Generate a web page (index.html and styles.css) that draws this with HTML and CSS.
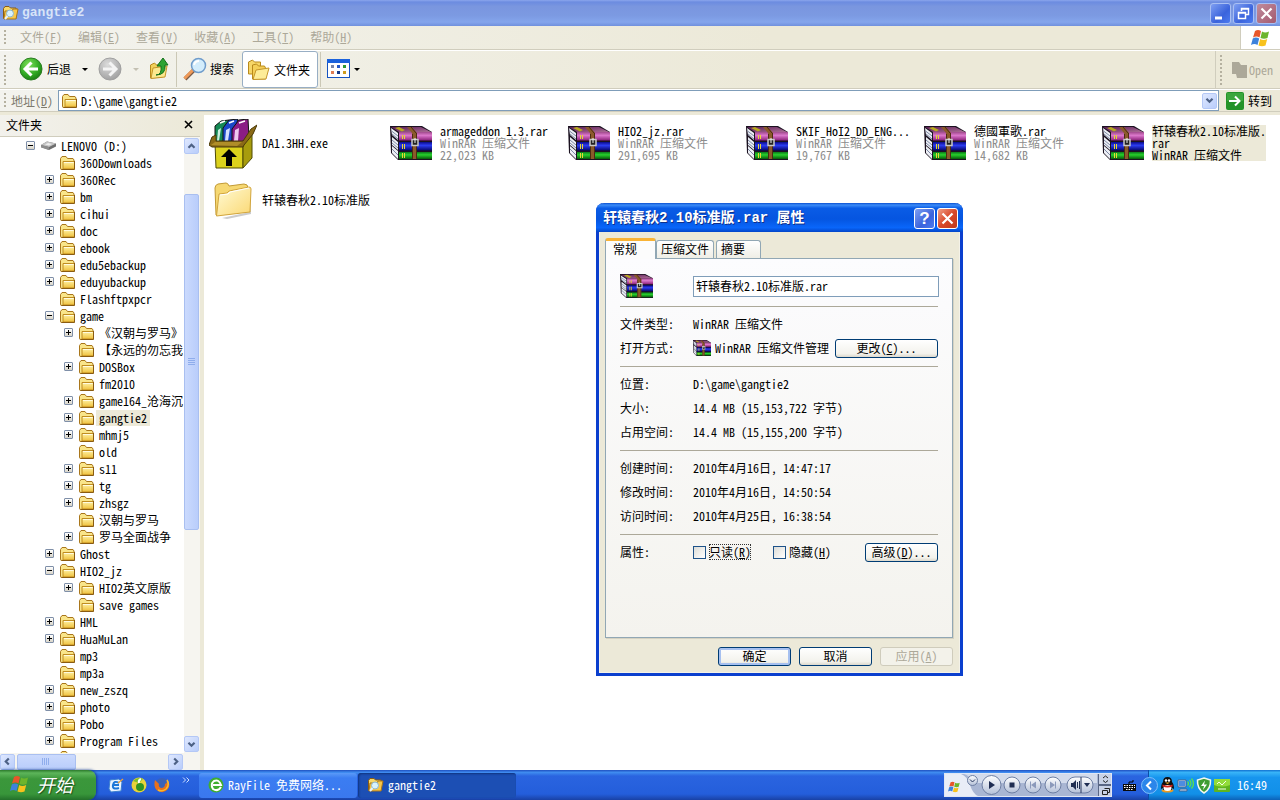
FILE: index.html
```html
<!DOCTYPE html>
<html lang="zh-CN">
<head>
<meta charset="utf-8">
<title>gangtie2</title>
<link rel="stylesheet" href="styles.css">
</head>
<body>
<svg class="defs" aria-hidden="true">
  <defs>
    <linearGradient id="gFold" x1="0" y1="0" x2="0" y2="1"><stop offset="0" stop-color="#fff3a6"/><stop offset="1" stop-color="#efc03c"/></linearGradient>
    <linearGradient id="gBig" x1="0" y1="0" x2="1" y2="1"><stop offset="0" stop-color="#fffbd6"/><stop offset="1" stop-color="#fbd873"/></linearGradient>
    <radialGradient id="gGreen" cx=".4" cy=".3" r=".8"><stop offset="0" stop-color="#7fe05a"/><stop offset=".6" stop-color="#2fa822"/><stop offset="1" stop-color="#14700f"/></radialGradient>
    <radialGradient id="gGrey" cx=".4" cy=".3" r=".8"><stop offset="0" stop-color="#dcdcdc"/><stop offset="1" stop-color="#9a9a9a"/></radialGradient>
    <linearGradient id="gPink" x1="0" y1="0" x2="0" y2="1"><stop offset="0" stop-color="#a04a8c"/><stop offset=".4" stop-color="#dc78cc"/><stop offset="1" stop-color="#8a1f78"/></linearGradient>
    <linearGradient id="gTop" x1="0" y1="0" x2="1" y2="1"><stop offset="0" stop-color="#5a1c55"/><stop offset="1" stop-color="#ad6f96"/></linearGradient>
    <linearGradient id="gBlue" x1="0" y1="0" x2="0" y2="1"><stop offset="0" stop-color="#0a0a8a"/><stop offset=".4" stop-color="#2c3cf0"/><stop offset="1" stop-color="#05056a"/></linearGradient>
    <linearGradient id="gGrn" x1="0" y1="0" x2="0" y2="1"><stop offset="0" stop-color="#0a7a1a"/><stop offset=".4" stop-color="#28d02c"/><stop offset="1" stop-color="#055a0a"/></linearGradient>
    <linearGradient id="gBtn" x1="0" y1="0" x2="0" y2="1"><stop offset="0" stop-color="#ffffff"/><stop offset="1" stop-color="#b4c0d8"/></linearGradient>
  </defs>
  <symbol id="folder" viewBox="0 0 17 16">
    <path d="M2 14.500L1.500 13V3.500L3 1.500h4l1.500 2H14l1 1.500v9z" fill="#f9e58a" stroke="#a9761b"/>
    <path d="M4 6.500h11.500V14H4z" fill="url(#gFold)" stroke="#c08d20"/>
    <path d="M3 14.500h12.500V6" fill="none" stroke="#8a5c12"/>
    <path d="M5 7.500h9.500" stroke="#fffbe0"/>
  </symbol>
  <symbol id="bigfolder" viewBox="0 0 38 38">
    <path d="M8 37L36 31l1-12v14l-24 5z" fill="#999" opacity=".5"/>
    <path d="M2 34L1 7q0-3 3-4l8-1q2 0 3 3l15-2q4 0 4 4l-3 24z" fill="#f6d872" stroke="#c29a35"/>
    <path d="M2.500 35L5 13l8-1 2-2 20-4q2 0 2 2l-1 23z" fill="url(#gBig)" stroke="#d2a53c"/>
    <path d="M6 14l8-1 2-2 19-4" stroke="#fff" fill="none"/>
  </symbol>
  <symbol id="search-folder" viewBox="0 0 17 16">
    <path d="M1.500 13.500V3.500L3 1.500h4l1.500 1.500H14v10.500z" fill="#f9d96a" stroke="#8a5c12"/>
    <path d="M3 6h7l1-2h5l-2 10H2z" fill="#f8c84a" stroke="#a9761b"/>
    <circle cx="8" cy="8.500" r="3.500" fill="#d8f2fd" stroke="#8db6cf"/>
    <path d="M5.500 11l-2.500 3" stroke="#e8f2fa" stroke-width="2"/>
  </symbol>
  <symbol id="drive" viewBox="0 0 17 12">
    <path d="M1 5l6-3.500 9 2v3L9 10 1 7z" fill="#6f6f6f"/><path d="M1 5l6-3.500 9 2L9 7z" fill="#c4c4c4"/><path d="M1 5l8 2v3L1 7.500z" fill="#8d8d8d"/><path d="M5 4.500l3-1.500 4 1-3 1.500z" fill="#eee"/>
  </symbol>
  <symbol id="rar" viewBox="0 0 42 34">
    <path d="M0 0h32l10 6v28H8L1 27z" fill="#1b1220"/>
    <path d="M1 1h30l10 5H9z" fill="url(#gTop)"/>
    <path d="M5 2l4-1 6 3-3 1.500z" fill="#b8a91e"/>
    <path d="M1 2l7 5v7L2 9zM2 11l6 5v8l-6-5zM2 20l6 5v8l-6-6z" fill="#eceef4"/>
    <path d="M1.500 5L8 10M2 8l6 5M2 14l6 5M2 17l6 5M2 23l6 6" stroke="#7f8aa6"/>
    <path d="M9 6h33v8.500H9z" fill="url(#gPink)"/>
    <path d="M9 16h33v8.500H9z" fill="url(#gBlue)"/>
    <path d="M9 26h33v7H9z" fill="url(#gGrn)"/>
    <path d="M12.500 9v4m2-4v4m-2 5v5m2-5v5m-2 4v5m2-5v5" stroke="#e8d832"/>
    <path d="M17 1h5l5 6v26h-5V7z" fill="#8b5a2b"/><path d="M26.500 7v26M21 1l5 6M22.500 8v25" stroke="#4b2c10" fill="none"/>
    <rect x="22" y="13.500" width="6" height="6" fill="#222" stroke="#c8c8c8" stroke-width="1.500"/><path d="M25 12v5" stroke="#eee"/>
  </symbol>
  <symbol id="sfx" viewBox="0 0 48 50">
    <path d="M6 23V7l6-5 8-1-5 21z" fill="#158a55" stroke="#111"/><path d="M9 11l3-2-2 13H8z" fill="#c9efdf"/>
    <path d="M14 23V9l6-8 9-1-6 22z" fill="#1b48c8" stroke="#111"/><path d="M17 11l4-2-2 13h-3z" fill="#d4e0ff"/>
    <path d="M23 23V10l7-9 9-1 1 18-9 6z" fill="#8b1d86" stroke="#111"/><path d="M26 11l4-2-1 13h-4z" fill="#efc7f0"/>
    <path d="M11 4l5-2M20 4l5-2M30 4l6-2" stroke="#fff" stroke-width="1.500"/>
    <path d="M6 24l28-1v26H7z" fill="#dcd21c" stroke="#4e4a05"/>
    <path d="M34 23l9-7v23l-9 10z" fill="#a79c0d" stroke="#4e4a05"/>
    <path d="M0 26l3-8 4-2v6h27l8-12 6-4-4 9-9 11-1 2H3z" fill="#8a6a16" stroke="#4b3a08"/>
    <path d="M2 26l4-3h27l-5 4z" fill="#b08e28"/>
    <path d="M20 30l8 8h-5v9h-6v-9h-5z" fill="#000"/>
  </symbol>
  <symbol id="flag" viewBox="0 0 20 18">
    <path d="M4 2q3-2 6 0L8.500 8.500q-3-2-6.500 0z" fill="#e8562a"/><path d="M11 2.500q3 2 7 0L16.500 9q-3.500 1.500-7 0z" fill="#6db52c"/>
    <path d="M1.800 9.500q3-2 6.400 0L6.500 16q-3-2-6.500 0z" fill="#3d82dc"/><path d="M9.200 10q3 2 7 0l-1.700 6.500q-3.500 1.500-7 0z" fill="#f8c21c"/>
  </symbol>
</svg>

<header class="titlebar">
  <svg class="i17"><use href="#search-folder"/></svg>
  <h1>gangtie2</h1>
  <div class="winbtns">
    <button class="wb" aria-label="最小化"><svg viewBox="0 0 19 19"><path d="M4 14h7" stroke="#fff" stroke-width="3"/></svg></button>
    <button class="wb" aria-label="还原"><svg viewBox="0 0 19 19"><path d="M7.500 7V4.500h7v6H12M7 5h8M4.500 8.500h7v6h-7zM4 9h8" fill="none" stroke="#fff" stroke-width="1.500"/></svg></button>
    <button class="wb x" aria-label="关闭"><svg viewBox="0 0 19 19"><path d="M4.500 4.500l10 10m0-10l-10 10" stroke="#fff" stroke-width="2.200"/></svg></button>
  </div>
</header>

<nav class="menubar">
  <i class="grip"></i>
  <button>文件(<u>F</u>)</button><button>编辑(<u>E</u>)</button><button>查看(<u>V</u>)</button><button>收藏(<u>A</u>)</button><button>工具(<u>T</u>)</button><button>帮助(<u>H</u>)</button>
  <div class="brand"><svg width="20" height="18"><use href="#flag"/></svg></div>
</nav>

<div class="toolbar">
  <i class="grip"></i>
  <button class="tb back"><svg width="24" height="24" viewBox="0 0 24 24"><circle cx="12" cy="12" r="11" fill="url(#gGreen)" stroke="#2b7d22"/><path d="M12.500 5.500L6 12l6.500 6.500M7 12h12" fill="none" stroke="#fff" stroke-width="3"/></svg>后退</button>
  <button class="drop" aria-label="后退列表"></button>
  <button class="tb fwd" aria-label="前进"><svg width="24" height="24" viewBox="0 0 24 24"><circle cx="12" cy="12" r="11" fill="url(#gGrey)" stroke="#a0a0a0"/><path d="M11.500 5.500L18 12l-6.500 6.500M17 12H5" fill="none" stroke="#f4f4f4" stroke-width="3"/></svg></button>
  <button class="drop off" aria-label="前进列表"></button>
  <button class="tb up" aria-label="向上"><svg width="20" height="24" viewBox="0 0 20 24"><path d="M1.500 21V8l4-2 2 2 6-1v13z" fill="#f2d05a" stroke="#b98a1c"/><path d="M2 21.500L4 11l14-2-2 11z" fill="#fbe88e" stroke="#c4952a"/><path d="M7 18q6 0 5-9H8l6-8 5 7h-3q1 10-9 10z" fill="#2ea332" stroke="#13701a"/></svg></button>
  <i class="sep"></i>
  <button class="tb find"><svg width="24" height="24" viewBox="0 0 24 24"><path d="M2 22l9-9" stroke="#7b5b46" stroke-width="4"/><path d="M1.500 21.500l9-9" stroke="#f09a58" stroke-width="3"/><circle cx="15.500" cy="8.500" r="7" fill="#d3edfc" stroke="#6f9ccb" stroke-width="1.500"/><path d="M11 8q1-4 5-4" stroke="#fff" stroke-width="2" fill="none"/></svg>搜索</button>
  <button class="tb folders"><svg width="24" height="22" viewBox="0 0 24 22"><path d="M1.500 15V3l4-2 2 2h6v12z" fill="#f6d668" stroke="#b98a1c"/><path d="M5.500 20V6l4-1 2 2h6l1 2v11z" fill="#f4cf58" stroke="#b98a1c"/><path d="M6 20.500L9 11l13-2-3 11z" fill="#fdec98" stroke="#c4952a"/></svg>文件夹</button>
  <i class="sep"></i>
  <button class="tb view" aria-label="查看"><svg width="23" height="19" viewBox="0 0 23 19"><rect x=".5" y=".5" width="22" height="18" fill="#fff" stroke="#1553c0"/><path d="M0 2h23" stroke="#1b62dc" stroke-width="4"/><path d="M4 6h3v3H4z" fill="#7a86a8"/><path d="M10 6h3v3h-3z" fill="#2458c8"/><path d="M16 6h3v3h-3z" fill="#2e9a34"/><path d="M4 12h3v3H4z" fill="#e07d52"/><path d="M10 12h3v3h-3z" fill="#173c8a"/><path d="M16 12h3v3h-3z" fill="#cf9c1c"/></svg></button>
  <button class="drop near" aria-label="查看方式"></button>
  <div class="openbar"><i class="grip"></i><button disabled><svg width="17" height="17" viewBox="0 0 17 17"><path d="M1 1h7l2 3h6v13H6l-1-4H1z" fill="#aca899"/></svg>Open</button></div>
</div>

<form class="address" onsubmit="return false">
  <i class="grip"></i>
  <label for="addr">地址(<u>D</u>)</label>
  <div class="combo"><svg class="i17"><use href="#folder"/></svg><input id="addr" value="D:\game\gangtie2"><button type="button" class="sb" aria-label="地址列表"><svg viewBox="0 0 15 15"><path d="M4 5.500l3.500 3.500L11 5.500"/></svg></button></div>
  <button class="go"><svg width="18" height="18" viewBox="0 0 18 18"><rect width="18" height="18" rx="2" fill="#249329"/><path d="M1 1h16v8H1z" fill="#4bb34a" opacity=".6"/><path d="M3 9h10M9 4.500L13.500 9 9 13.500" fill="none" stroke="#fff" stroke-width="2"/></svg>转到</button>
</form>

<div class="content">
  <aside class="side">
    <div class="sidehead"><h2>文件夹</h2><button aria-label="关闭"><svg width="9" height="9" viewBox="0 0 9 9"><path d="M1 1l7 7m0-7L1 8" stroke="#000" stroke-width="1.600"/></svg></button></div>
    <div class="treewrap">
      <ul class="tree">
        <li><button class="ex minus" aria-label="折叠"></button><svg class="i17"><use href="#drive"/></svg><span>LENOVO (D:)</span></li>
        <li class="l1"><i class="ex none"></i><svg class="i17"><use href="#folder"/></svg><span>360Downloads</span></li>
        <li class="l1"><button class="ex" aria-label="展开"></button><svg class="i17"><use href="#folder"/></svg><span>360Rec</span></li>
        <li class="l1"><button class="ex" aria-label="展开"></button><svg class="i17"><use href="#folder"/></svg><span>bm</span></li>
        <li class="l1"><button class="ex" aria-label="展开"></button><svg class="i17"><use href="#folder"/></svg><span>cihui</span></li>
        <li class="l1"><button class="ex" aria-label="展开"></button><svg class="i17"><use href="#folder"/></svg><span>doc</span></li>
        <li class="l1"><button class="ex" aria-label="展开"></button><svg class="i17"><use href="#folder"/></svg><span>ebook</span></li>
        <li class="l1"><button class="ex" aria-label="展开"></button><svg class="i17"><use href="#folder"/></svg><span>edu5ebackup</span></li>
        <li class="l1"><button class="ex" aria-label="展开"></button><svg class="i17"><use href="#folder"/></svg><span>eduyubackup</span></li>
        <li class="l1"><i class="ex none"></i><svg class="i17"><use href="#folder"/></svg><span>Flashftpxpcr</span></li>
        <li class="l1"><button class="ex minus" aria-label="折叠"></button><svg class="i17"><use href="#folder"/></svg><span>game</span></li>
        <li class="l2"><button class="ex" aria-label="展开"></button><svg class="i17"><use href="#folder"/></svg><span>《汉朝与罗马》</span></li>
        <li class="l2"><i class="ex none"></i><svg class="i17"><use href="#folder"/></svg><span>【永远的勿忘我</span></li>
        <li class="l2"><button class="ex" aria-label="展开"></button><svg class="i17"><use href="#folder"/></svg><span>DOSBox</span></li>
        <li class="l2"><i class="ex none"></i><svg class="i17"><use href="#folder"/></svg><span>fm2010</span></li>
        <li class="l2"><button class="ex" aria-label="展开"></button><svg class="i17"><use href="#folder"/></svg><span>game164_沧海沉</span></li>
        <li class="l2"><button class="ex" aria-label="展开"></button><svg class="i17"><use href="#folder"/></svg><span class="sel">gangtie2</span></li>
        <li class="l2"><button class="ex" aria-label="展开"></button><svg class="i17"><use href="#folder"/></svg><span>mhmj5</span></li>
        <li class="l2"><i class="ex none"></i><svg class="i17"><use href="#folder"/></svg><span>old</span></li>
        <li class="l2"><button class="ex" aria-label="展开"></button><svg class="i17"><use href="#folder"/></svg><span>s11</span></li>
        <li class="l2"><button class="ex" aria-label="展开"></button><svg class="i17"><use href="#folder"/></svg><span>tg</span></li>
        <li class="l2"><button class="ex" aria-label="展开"></button><svg class="i17"><use href="#folder"/></svg><span>zhsgz</span></li>
        <li class="l2"><i class="ex none"></i><svg class="i17"><use href="#folder"/></svg><span>汉朝与罗马</span></li>
        <li class="l2"><button class="ex" aria-label="展开"></button><svg class="i17"><use href="#folder"/></svg><span>罗马全面战争</span></li>
        <li class="l1"><button class="ex" aria-label="展开"></button><svg class="i17"><use href="#folder"/></svg><span>Ghost</span></li>
        <li class="l1"><button class="ex minus" aria-label="折叠"></button><svg class="i17"><use href="#folder"/></svg><span>HIO2_jz</span></li>
        <li class="l2"><button class="ex" aria-label="展开"></button><svg class="i17"><use href="#folder"/></svg><span>HIO2英文原版</span></li>
        <li class="l2"><i class="ex none"></i><svg class="i17"><use href="#folder"/></svg><span>save games</span></li>
        <li class="l1"><button class="ex" aria-label="展开"></button><svg class="i17"><use href="#folder"/></svg><span>HML</span></li>
        <li class="l1"><button class="ex" aria-label="展开"></button><svg class="i17"><use href="#folder"/></svg><span>HuaMuLan</span></li>
        <li class="l1"><i class="ex none"></i><svg class="i17"><use href="#folder"/></svg><span>mp3</span></li>
        <li class="l1"><i class="ex none"></i><svg class="i17"><use href="#folder"/></svg><span>mp3a</span></li>
        <li class="l1"><button class="ex" aria-label="展开"></button><svg class="i17"><use href="#folder"/></svg><span>new_zszq</span></li>
        <li class="l1"><button class="ex" aria-label="展开"></button><svg class="i17"><use href="#folder"/></svg><span>photo</span></li>
        <li class="l1"><button class="ex" aria-label="展开"></button><svg class="i17"><use href="#folder"/></svg><span>Pobo</span></li>
        <li class="l1"><button class="ex" aria-label="展开"></button><svg class="i17"><use href="#folder"/></svg><span>Program Files</span></li>
        <li class="l1"><i class="ex none"></i><svg class="i17"><use href="#folder"/></svg></li>
      </ul>
      <div class="vscroll">
        <button class="sb" aria-label="向上滚动"><svg viewBox="0 0 15 15"><path d="M4 9l3.500-3.500L11 9"/></svg></button>
        <div class="vtrack"><div class="vthumb"><svg width="7" height="8" viewBox="0 0 7 8"><path d="M0 .5h7M0 2.500h7M0 4.500h7M0 6.500h7" stroke="#8fadec"/></svg></div></div>
        <button class="sb" aria-label="向下滚动"><svg viewBox="0 0 15 15"><path d="M4 5.500l3.500 3.500L11 5.500"/></svg></button>
      </div>
    </div>
    <div class="hscroll">
      <button class="sb" aria-label="向左滚动"><svg viewBox="0 0 15 15"><path d="M9 4L5.500 7.500 9 11"/></svg></button>
      <div class="htrack"><div class="hthumb"><svg width="8" height="7" viewBox="0 0 8 7"><path d="M.5 0v7M2.500 0v7M4.500 0v7M6.500 0v7" stroke="#8fadec"/></svg></div></div>
      <button class="sb" aria-label="向右滚动"><svg viewBox="0 0 15 15"><path d="M6 4l3.500 3.500L6 11"/></svg></button>
    </div>
  </aside>

  <main class="files">
    <div class="file"><div class="pic first"><svg width="48" height="50"><use href="#sfx"/></svg></div><p>DA1.3HH.exe</p></div>
    <div class="file"><div class="pic"><svg width="42" height="34"><use href="#rar"/></svg></div><p>armageddon 1.3.rar<small>WinRAR 压缩文件</small><small>22,023 KB</small></p></div>
    <div class="file"><div class="pic"><svg width="42" height="34"><use href="#rar"/></svg></div><p>HIO2_jz.rar<small>WinRAR 压缩文件</small><small>291,695 KB</small></p></div>
    <div class="file"><div class="pic"><svg width="42" height="34"><use href="#rar"/></svg></div><p>SKIF_HoI2_DD_ENG...<small>WinRAR 压缩文件</small><small>19,767 KB</small></p></div>
    <div class="file"><div class="pic"><svg width="42" height="34"><use href="#rar"/></svg></div><p>德國軍歌.rar<small>WinRAR 压缩文件</small><small>14,682 KB</small></p></div>
    <div class="file"><div class="pic"><svg width="42" height="34"><use href="#rar"/></svg></div><p class="picked">轩辕春秋2.10标准版.<br>rar<br>WinRAR 压缩文件</p></div>
    <div class="file"><div class="pic"><svg width="38" height="38"><use href="#bigfolder"/></svg></div><p>轩辕春秋2.10标准版</p></div>
  </main>
</div>

<section class="dialog" role="dialog" aria-labelledby="dlg">
  <div class="dtitle"><h2 id="dlg">轩辕春秋2.10标准版.rar 属性</h2>
    <button class="wb" aria-label="帮助">?</button>
    <button class="wb x" aria-label="关闭"><svg viewBox="0 0 19 19"><path d="M4.500 4.500l10 10m0-10l-10 10" stroke="#fff" stroke-width="2.200"/></svg></button>
  </div>
  <form class="dbody" onsubmit="return false">
    <div class="tabs"><button class="tab on">常规</button><button class="tab">压缩文件</button><button class="tab">摘要</button></div>
    <div class="panel">
      <div class="row name"><span class="lab"><svg width="33" height="24" viewBox="0 0 42 34" preserveAspectRatio="none"><use href="#rar" width="42" height="34"/></svg></span><input aria-label="文件名" value="轩辕春秋2.10标准版.rar"></div>
      <hr>
      <div class="row"><span class="lab">文件类型:</span><span>WinRAR 压缩文件</span></div>
      <div class="row"><span class="lab">打开方式:</span><svg class="mini" width="18" height="16" viewBox="0 0 42 34" preserveAspectRatio="none"><use href="#rar" width="42" height="34"/></svg><span class="grow">WinRAR 压缩文件管理</span><button class="btn wide">更改(<u>C</u>)...</button></div>
      <hr>
      <div class="row"><span class="lab">位置:</span><span>D:\game\gangtie2</span></div>
      <div class="row"><span class="lab">大小:</span><span>14.4 MB (15,153,722 字节)</span></div>
      <div class="row"><span class="lab">占用空间:</span><span>14.4 MB (15,155,200 字节)</span></div>
      <hr>
      <div class="row"><span class="lab">创建时间:</span><span>2010年4月16日, 14:47:17</span></div>
      <div class="row"><span class="lab">修改时间:</span><span>2010年4月16日, 14:50:54</span></div>
      <div class="row"><span class="lab">访问时间:</span><span>2010年4月25日, 16:38:54</span></div>
      <hr>
      <div class="row"><span class="lab">属性:</span>
        <label class="check"><input type="checkbox"><span class="focus">只读(<u>R</u>)</span></label>
        <label class="check"><input type="checkbox"><span>隐藏(<u>H</u>)</span></label>
        <button class="btn adv">高级(<u>D</u>)...</button></div>
    </div>
    <div class="actions"><button class="btn def">确定</button><button class="btn">取消</button><button class="btn" disabled>应用(<u>A</u>)</button></div>
  </form>
</section>

<footer class="taskbar">
  <button class="start"><svg width="20" height="18"><use href="#flag"/></svg>开始</button>
  <div class="quick">
    <button aria-label="显示桌面"><svg width="16" height="16" viewBox="0 0 16 16"><path d="M2 3l9-1 3 3-1 9-10 1-2-3z" fill="#e9f4ff" stroke="#3b7fd0"/><path d="M11 6Q6 3 5 8t6 3M5 8h6" stroke="#1c76d8" stroke-width="2" fill="none"/><path d="M10 6l5-4" stroke="#e9a03a" stroke-width="1.500"/></svg></button>
    <button aria-label="浏览器"><svg width="16" height="16" viewBox="0 0 16 16"><circle cx="8" cy="8" r="7.500" fill="#e8d23a"/><path d="M2 4q5-5 10-2L8 6z" fill="#7dbd2a"/><circle cx="9" cy="10" r="4" fill="#2f9422"/><path d="M8 6q-1-3 2-4" stroke="#fff" stroke-width="2" fill="none"/></svg></button>
    <button aria-label="Firefox"><svg width="16" height="16" viewBox="0 0 16 16"><circle cx="8" cy="8" r="7" fill="#3a62b8"/><path d="M1 3q-2 8 3 11 6 3 10-2 3-5-1-10 1 4-2 5 0 4-4 4-3-1-2-4L3 5z" fill="#e8701c"/><path d="M13 3q3 5-1 9-4 3-8 1" stroke="#f9b82c" stroke-width="1.500" fill="none"/></svg></button>
    <button class="more" aria-label="更多"><svg width="8" height="6" viewBox="0 0 8 6"><path d="M1 .5L3.500 3 1 5.500M4.500.5L7 3 4.500 5.500" fill="none" stroke="#cfe0ff"/></svg></button>
  </div>
  <button class="task"><svg width="16" height="16" viewBox="0 0 16 16"><circle cx="8" cy="8" r="7.500" fill="#3fae2e"/><path d="M13 10q-3 5-8 2-3-5 1-8 5-2 7 4H5" stroke="#fff" stroke-width="2" fill="none"/></svg>RayFile 免费网络...</button>
  <button class="task active"><svg class="i17"><use href="#search-folder"/></svg>gangtie2</button>
  <div class="media">
    <svg width="168" height="24" viewBox="0 0 168 24" role="img" aria-label="媒体播放器">
      <rect x=".5" y=".5" width="167" height="23" fill="#a9b6d3" stroke="#dfe6f5"/>
      <path d="M1 1h16q6 2 9 11t8 11H1z" fill="#e9edf7"/><path d="M20 1h133v9H30Q26 3 20 1z" fill="#d3dbeb"/>
      <g transform="translate(4 8) scale(.65)"><use href="#flag" width="20" height="18"/></g>
      <g fill="url(#gBtn)" stroke="#6e7fa3"><circle cx="28.500" cy="7.500" r="5"/><circle cx="47.500" cy="12" r="9.500"/><circle cx="68" cy="12" r="8"/><circle cx="89" cy="12" r="8"/><circle cx="109" cy="12" r="8"/><rect x="123" y="4" width="26" height="16" rx="8"/></g>
      <path d="M26 6.500l2.500 2.500L31 6.500M137 4v16" fill="none" stroke="#26365e"/>
      <path d="M45 8v8l6-4zM65.500 9.500h5v5h-5zM127 10h2l3-3v10l-3-3h-2zM140 10h6l-3 4z" fill="#1f2d52"/>
      <path d="M133.500 9v6M135.500 8v8" stroke="#1f2d52"/>
      <path d="M92 8.500v7l-5-3.500zM86 8.500h1v7h-1zM106 8.500v7l5-3.500zM111 8.500h1v7h-1z" fill="#8c9abb"/>
      <path d="M154 1h13v22h-13z" fill="#5a6785"/><path d="M155 1h12v10h-12zM155 13h12v10h-12z" fill="#c9d2e6"/>
      <path d="M159 5l2.500-2L164 5M159 7.500l2.500 2 2.500-2M160.500 15.500h5v4h-2M158.500 17.500h5v4h-5z" fill="none" stroke="#222" />
    </svg>
    <button aria-label="输入法"><svg width="13" height="11" viewBox="0 0 13 11"><path d="M6 4V2h4V0" stroke="#000" fill="none"/><path d="M0 4h13v7H0z" fill="#0a0a0a"/><path d="M1 5.500h11M1 7.500h11M3 9.500h7" stroke="#fff" stroke-dasharray="1.500 1"/></svg></button>
  </div>
  <div class="tray">
    <button class="hide" aria-label="隐藏图标"><svg width="17" height="17" viewBox="0 0 17 17"><circle cx="8.500" cy="8.500" r="8" fill="#2b86ea" stroke="#7fc0fb"/><path d="M10 4.500l-4 4 4 4" stroke="#fff" stroke-width="2" fill="none"/></svg></button>
    <svg width="15" height="16" viewBox="0 0 15 16"><ellipse cx="7.500" cy="13.500" rx="6" ry="2" fill="#e99a20"/><path d="M1 12q0-5 2-7 0-5 4.500-5T12 5q2 2 2 7l-2-1v2H3v-2z" fill="#111"/><ellipse cx="7.500" cy="11" rx="4" ry="3" fill="#fff"/><circle cx="6" cy="3.500" r="1.200" fill="#fff"/><circle cx="9" cy="3.500" r="1.200" fill="#fff"/><path d="M5 5.500h5L7.500 7z" fill="#f8b51c"/><path d="M2.500 7.500q5 2.500 10 0v2q-5 2-10 0z" fill="#d8261c"/></svg>
    <svg width="17" height="16" viewBox="0 0 17 16"><path d="M1 3h8v7H1zM3 12h7v2H2z" fill="#cfe2f8" stroke="#43658f"/><path d="M2 4h6v5H2z" fill="#4d8ce0"/><path d="M10.500 4.500q2 2 0 4M12.500 3q3 3 0 7M14.500 1.500q4 5 0 10" stroke="#5be04a" stroke-width="1.300" fill="none"/></svg>
    <svg width="16" height="17" viewBox="0 0 16 17"><path d="M8 1l6.500 2Q15 12 8 16 1 12 1.500 3z" fill="#3f9d33" stroke="#f2f7ef" stroke-width="1.500"/><path d="M9 3.500L5 9h3l-1 4 4-5.500H8z" fill="#fff"/></svg>
    <svg width="16" height="13" viewBox="0 0 16 13"><rect width="16" height="13" rx="1" fill="#5fb51f"/><path d="M0 0h16v6q-8 3-16 0z" fill="#93dc3a"/><path d="M3 5l2-2 3 3 4-4M4 10h8" stroke="#f4ffe8" fill="none"/></svg>
    <time>16:49</time>
  </div>
</footer>
</body>
</html>
```
FILE: styles.css
```css
* { box-sizing: border-box; }
html, body { height: 100%; }
body {
  margin: 0; display: flex; flex-direction: column; overflow: hidden; position: relative;
  background: #ece9d8; color: #000;
  font: 12px/16px "Noto Sans Mono CJK SC", "Liberation Mono", "Noto Sans CJK SC", monospace;
}
button, input { font: inherit; color: inherit; margin: 0; }
button { background: none; border: 0; padding: 0; white-space: nowrap; }
h1, h2, p, ul { margin: 0; padding: 0; }
svg { display: block; flex: none; }
.defs { position: absolute; width: 0; height: 0; }
.i17 { width: 17px; height: 16px; }

/* Window title */
.titlebar {
  height: 26px; flex: none; display: flex; align-items: center; gap: 3px; padding: 0 3px 0 2px;
  background: linear-gradient(#8ba6ec 0, #6c8ce0 8%, #7a96df 25%, #7c9ae2 60%, #84a5ec 85%, #7090dd 100%);
}
.titlebar h1 { flex: 1; color: #d8e4f8; font: bold 13px/16px "Liberation Mono", monospace; }
.winbtns { display: flex; gap: 2px; }
.wb {
  width: 21px; height: 21px; border: 1px solid #fff; border-radius: 3px; flex: none;
  display: grid; place-items: center; color: #fff;
  background: linear-gradient(135deg, #7f9ff2, #3a63dc 60%, #4c7bf0);
}
.wb svg { width: 19px; height: 19px; }
.wb.x { background: linear-gradient(135deg, #f0a088, #d9482a 50%, #c03a1c); }
.titlebar .wb { border-color: #a9bff3; }
.titlebar .wb.x { background: linear-gradient(135deg, #c08c9c, #a45a70); }

/* Bars */
.grip { flex: none; width: 3px; height: 16px; margin-left: 4px; background: radial-gradient(circle at 1px 1px, #b5b1a0 1px, transparent 1px) 0 0 / 3px 4px; }
.menubar, .toolbar, .address { flex: none; display: flex; align-items: center; background: linear-gradient(90deg, #f3f3ee, #ece9d8 60%); border-bottom: 1px solid #d0cdbd; }
.menubar { height: 24px; color: #aca899; }
.menubar button { margin-left: 16px; padding-bottom: 2px; }
.menubar .grip + button { margin-left: 13px; }
.brand { margin-left: auto; width: 40px; align-self: stretch; background: #fff; border-left: 1px solid #d0cdbd; display: grid; place-items: center; }
.toolbar { height: 39px; border-top: 1px solid #fff; }
.toolbar .grip { height: 30px; }
.tb { display: flex; align-items: center; height: 37px; padding-bottom: 2px; }
.back { margin-left: 12px; gap: 4px; }
.fwd { margin-left: 11px; }
.up { margin-left: 11px; }
.find { margin-left: 6px; gap: 3px; }
.folders { margin-left: 8px; gap: 3px; padding: 0 7px 0 4px; background: #fff; border: 1px solid #98aec4; border-radius: 3px; }
.view { margin-left: 6px; }
.sep { width: 1px; height: 35px; background: #cbc8b6; margin-left: 7px; }
.folders + .sep { margin-left: 2px; }
.drop { width: 5px; height: 16px; margin-left: 11px; display: grid; place-items: center; }
.drop::before { content: ""; border: 3px solid transparent; border-top-color: #000; border-bottom: 0; }
.drop.off::before { border-top-color: #c3c0b2; }
.drop.near { margin-left: 4px; }
.openbar { margin-left: auto; align-self: stretch; display: flex; align-items: center; border-left: 1px solid #d0cdbd; padding-right: 7px; }
.openbar button { display: flex; align-items: center; gap: 1px; color: #aca899; margin-left: 8px; }
.address { height: 23px; padding-right: 8px; border-top: 1px solid #fff; }
.address label { margin-left: 4px; color: #7d7a6d; }
.combo { flex: 1; margin-left: 5px; height: 21px; background: #fff; border: 1px solid #7f9db9; display: flex; align-items: center; padding: 1px 1px 1px 2px; gap: 3px; }
.combo input { flex: 1; min-width: 0; border: 0; padding: 0; outline: 0; background: none; }
.go { display: flex; align-items: center; gap: 4px; margin-left: 7px; }

.sb { width: 15px; height: 16px; flex: none; border: 1px solid #b4c8f6; border-radius: 2px; background: linear-gradient(135deg, #dfe8fe, #b9cdfb); display: grid; place-items: center; }
.sb svg { width: 13px; height: 13px; fill: none; stroke: #4d6185; stroke-width: 2.5; }

/* Panes */
.content { flex: 1; min-height: 0; display: flex; margin-top: 3px; gap: 4px; }
.side { width: 200px; flex: none; display: flex; flex-direction: column; background: #fff; }
.sidehead { height: 22px; flex: none; display: flex; align-items: center; justify-content: space-between; padding: 0 7px 2px 6px; background: linear-gradient(90deg, #f2f1ec, #ece9d8); border-bottom: 1px solid #d0cdbd; }
.sidehead h2 { font: inherit; }
.treewrap { flex: 1; min-height: 0; display: flex; }
.tree { flex: 1; min-width: 0; overflow: hidden; list-style: none; }
.tree li { height: 17px; display: flex; align-items: center; padding-left: 26px; white-space: nowrap; }
.tree li.l1 { padding-left: 45px; }
.tree li.l2 { padding-left: 64px; }
.tree span { margin-left: 1px; padding: 0 3px; line-height: 16px; }
.tree .sel { background: #ece9d8; }
.ex { width: 9px; height: 9px; flex: none; margin-right: 5px; border: 1px solid #7f8fa8; border-radius: 1px;
  background: linear-gradient(#000, #000) center / 5px 1px no-repeat, linear-gradient(#000, #000) center / 1px 5px no-repeat, linear-gradient(#fff, #d8d4c8); }
.ex.minus { background: linear-gradient(#000, #000) center / 5px 1px no-repeat, linear-gradient(#fff, #d8d4c8); }
.ex.none { background: none; border: 0; }
.vscroll { width: 16px; flex: none; display: flex; flex-direction: column; padding: 1px 0; background: #f6f5f0; }
.vtrack { flex: 1; padding-top: 40px; }
.vthumb { height: 62%; width: 15px; display: grid; place-items: center; background: linear-gradient(90deg, #cbdafd, #b9cdfb); border: 1px solid #a9bff0; border-radius: 2px; }
.hscroll { height: 17px; flex: none; display: flex; align-items: center; background: #f6f5f0; padding-right: 17px; }
.htrack { flex: 1; padding-left: 2px; }
.hthumb { width: 39%; height: 16px; display: grid; place-items: center; background: linear-gradient(#cbdafd, #b9cdfb); border: 1px solid #a9bff0; border-radius: 2px; }
.files { flex: 1; background: #fff; padding: 0 0 0 5px; display: grid; grid-template-columns: repeat(auto-fill, 178px); grid-auto-rows: 57px; align-content: start; }
.file { display: flex; align-items: center; gap: 5px; padding-bottom: 2px; }
.pic { width: 48px; display: grid; place-items: center; flex: none; }
.pic.first { padding-top: 2px; }
.file p { line-height: 12px; white-space: nowrap; }
.file small { display: block; font-size: 12px; color: #8d8d8d; }
.file .picked { background: #ece9d8; }

/* Properties window */
.dialog { position: absolute; left: 596px; top: 203px; width: 367px; border: 3px solid #0b3fce; border-top: 0; border-radius: 8px 8px 0 0; background: #ece9d8; box-shadow: inset 0 0 0 1px #f4f2e8; }
.dtitle { height: 29px; margin: 0 -3px; border-radius: 8px 8px 0 0; display: flex; align-items: center; gap: 2px; padding: 1px 5px 0 7px; background: linear-gradient(#0a4fd0 0, #3c8cf8 7%, #0a5ce6 18%, #0555e0 55%, #0966fa 85%, #0345c8 100%); }
.dtitle h2 { flex: 1; color: #fff; white-space: nowrap; text-shadow: 1px 1px #10308a; font: bold 14px/18px "Liberation Mono", "Noto Sans CJK SC", monospace; }
.dtitle .wb { font: bold 17px/17px "Liberation Sans", sans-serif; }
.dbody { padding: 6px 7px 7px 6px; }
.tabs { display: flex; align-items: flex-end; gap: 2px; height: 20px; }
.tab { height: 18px; padding: 0 4px 2px; border: 1px solid #91a7b4; border-bottom: 0; border-radius: 3px 3px 0 0; background: linear-gradient(#fff, #efeee6); line-height: 16px; }
.tab:last-child { padding-right: 15px; }
.tab.on { height: 21px; padding: 0 18px 3px 7px; margin: 0 -2px -1px 0; border-top: 3px solid #f9b335; background: #fcfcfc; z-index: 1; }
.panel { height: 380px; padding: 15px 14px 0; border: 1px solid #91a7b4; background: linear-gradient(#fcfcfe, #f4f3ee); box-shadow: 1px 1px #d5d2c2; }
.row { height: 24px; display: flex; align-items: center; white-space: nowrap; }
.row .lab { width: 73px; flex: none; }
.row.name input { flex: 1; min-width: 0; height: 21px; padding: 0 2px 2px; border: 1px solid #7f9db9; background: #fff; outline: 0; margin-right: -1px; }
.panel hr { height: 1px; border: 0; margin: 6px 0 5px; background: #aca899; }
.row.name { margin-bottom: 8px; }
.mini { margin-right: 4px; }
.grow { flex: 1; min-width: 0; overflow: hidden; }
.btn { width: 73px; height: 19px; padding-bottom: 1px; border: 1px solid #003c74; border-radius: 3px; background: linear-gradient(#fff, #f3f2ec 80%, #dcd8cc); line-height: 16px; }
.btn.wide { width: 103px; margin-left: 6px; }
.btn.adv { margin-left: auto; }
.btn.def { box-shadow: inset 0 0 0 2px #a6c0f0; }
.btn:disabled { color: #aca899; border-color: #cfccbc; background: #f3f2ea; }
.check { display: flex; align-items: center; gap: 3px; margin-right: 22px; }
.check input { appearance: none; width: 13px; height: 13px; border: 1px solid #1d5289; background: linear-gradient(135deg, #dcdcd7, #fff); }
.focus { outline: 1px dotted #333; outline-offset: -1px; }
.actions { display: flex; justify-content: flex-end; gap: 8px; padding-top: 9px; }

/* Taskbar */
.taskbar { height: 30px; flex: none; display: flex; align-items: stretch; color: #fff; background: linear-gradient(#1f50c0 0, #3f8cf0 8%, #2a64e0 20%, #245edb 80%, #1941a5 100%); }
.start { width: 96px; display: flex; align-items: center; gap: 7px; padding: 0 0 2px 10px; border-radius: 0 8px 8px 0; background: linear-gradient(#2c7a2c 0, #5db55a 10%, #3b973b 30%, #38963a 80%, #23702a 100%); box-shadow: 1px 0 3px #123a90; font: italic 18px/24px "Noto Sans CJK SC", sans-serif; text-shadow: 1px 1px 1px #1c4d1c; }
.quick { width: 103px; display: flex; align-items: center; gap: 7px; padding-left: 12px; }
.quick .more { align-self: flex-start; padding: 7px 0 0 5px; }
.task { width: 158px; height: 25px; margin: 3px 1px 0 0; display: flex; align-items: center; gap: 4px; padding: 0 0 1px 9px; border-radius: 3px; background: linear-gradient(#5a9af8, #3b7df2 20%, #3a78ee); }
.task.active { background: #1c4fb4; box-shadow: inset 1px 1px 2px #10347e; }
.media { margin-left: auto; display: flex; align-items: center; gap: 11px; padding-right: 12px; }
.tray { display: flex; align-items: center; gap: 2px; padding-right: 13px; background: linear-gradient(#1270d0 0, #38b4f8 8%, #1795ee 25%, #1290e8 80%, #0c62b8 100%); border-left: 1px solid #0c4fa8; }
.hide { margin-left: -8px; }
.tray time { margin-left: 5px; }
```
